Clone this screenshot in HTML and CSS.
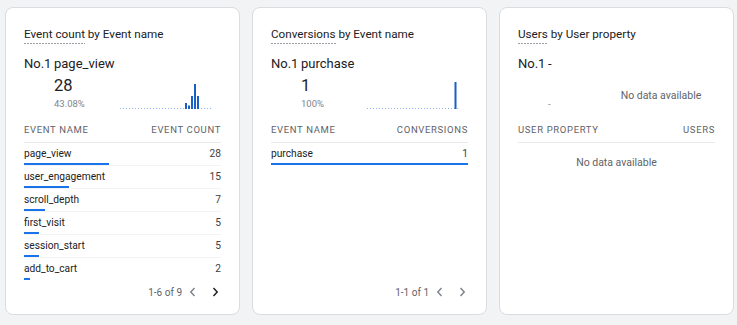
FILE: index.html
```html
<!DOCTYPE html>
<html lang="en">
<head>
    <meta charset="UTF-8">
    <meta name="viewport" content="width=device-width, initial-scale=1.0">
    <title>Events overview</title>
    <link rel="stylesheet" href="styles.css">
</head>
<body>
    <div class="dashboard">
        <section class="card">
            <h3 class="card-title"><span class="dim">Event count</span> by Event name</h3>
            <div class="top-item"><span class="rank">No.1</span><span>page_view</span></div>
            <div class="summary">
                <div class="summary-values">
                    <div class="value">28</div>
                    <div class="share">43.08%</div>
                </div>
                <svg class="spark" width="94" height="30" viewBox="0 0 94 30">
                    <line x1="0" y1="28.5" x2="92" y2="28.5" class="spark-base"/>
                    <rect x="65" y="23" width="2" height="6" class="spark-bar"/>
                    <rect x="68" y="25.5" width="2" height="3.5" class="spark-bar"/>
                    <rect x="71" y="16" width="2" height="13" class="spark-bar"/>
                    <rect x="74" y="4" width="2" height="25" class="spark-bar"/>
                    <rect x="77" y="16" width="2" height="13" class="spark-bar"/>
                </svg>
            </div>
            <div class="table">
                <div class="thead"><span>Event name</span><span>Event count</span></div>
                <div class="row">
                    <div class="row-line"><span>page_view</span><span class="num">28</span></div>
                    <div class="bar" style="width: 43.08%"></div>
                </div>
                <div class="row">
                    <div class="row-line"><span>user_engagement</span><span class="num">15</span></div>
                    <div class="bar" style="width: 23.08%"></div>
                </div>
                <div class="row">
                    <div class="row-line"><span>scroll_depth</span><span class="num">7</span></div>
                    <div class="bar" style="width: 10.77%"></div>
                </div>
                <div class="row">
                    <div class="row-line"><span>first_visit</span><span class="num">5</span></div>
                    <div class="bar" style="width: 7.69%"></div>
                </div>
                <div class="row">
                    <div class="row-line"><span>session_start</span><span class="num">5</span></div>
                    <div class="bar" style="width: 7.69%"></div>
                </div>
                <div class="row">
                    <div class="row-line"><span>add_to_cart</span><span class="num">2</span></div>
                    <div class="bar" style="width: 3.08%"></div>
                </div>
            </div>
            <div class="pager">
                <span class="page-info">1-6 of 9</span>
                <button type="button" class="page-btn disabled">
                    <svg width="8" height="10" viewBox="0 0 8 10"><path d="M5.5 1 1.8 5l3.7 4"/></svg>
                </button>
                <button type="button" class="page-btn">
                    <svg width="8" height="10" viewBox="0 0 8 10"><path d="M2.5 1 6.2 5 2.5 9"/></svg>
                </button>
            </div>
        </section>

        <section class="card">
            <h3 class="card-title"><span class="dim">Conversions</span> by Event name</h3>
            <div class="top-item"><span class="rank">No.1</span><span>purchase</span></div>
            <div class="summary">
                <div class="summary-values">
                    <div class="value">1</div>
                    <div class="share">100%</div>
                </div>
                <svg class="spark" width="94" height="30" viewBox="0 0 94 30">
                    <line x1="0" y1="28.5" x2="92" y2="28.5" class="spark-base"/>
                    <rect x="87.5" y="2" width="2" height="27" class="spark-bar"/>
                </svg>
            </div>
            <div class="table">
                <div class="thead"><span>Event name</span><span>Conversions</span></div>
                <div class="row">
                    <div class="row-line"><span>purchase</span><span class="num">1</span></div>
                    <div class="bar" style="width: 100%"></div>
                </div>
            </div>
            <div class="pager">
                <span class="page-info">1-1 of 1</span>
                <button type="button" class="page-btn disabled">
                    <svg width="8" height="10" viewBox="0 0 8 10"><path d="M5.5 1 1.8 5l3.7 4"/></svg>
                </button>
                <button type="button" class="page-btn disabled">
                    <svg width="8" height="10" viewBox="0 0 8 10"><path d="M2.5 1 6.2 5 2.5 9"/></svg>
                </button>
            </div>
        </section>

        <section class="card">
            <h3 class="card-title"><span class="dim">Users</span> by User property</h3>
            <div class="top-item"><span class="rank">No.1</span><span>-</span></div>
            <div class="summary">
                <div class="summary-values">
                    <div class="value"></div>
                    <div class="share">-</div>
                </div>
                <div class="spark empty">No data available</div>
            </div>
            <div class="table">
                <div class="thead"><span>User property</span><span>Users</span></div>
                <div class="no-data">No data available</div>
            </div>
        </section>
    </div>
</body>
</html>
```

FILE: styles.css
```css
body {
    margin: 0;
    background-color: #f1f3f4;
    font-family: Roboto, "Liberation Sans", Arial, sans-serif;
    color: #202124;
}
.dashboard {
    display: grid;
    grid-template-columns: repeat(3, 235px);
    gap: 12px;
    padding: 7px 3px 0 5px;
}
.card {
    height: 308px;
    box-sizing: border-box;
    background-color: #fff;
    border: 1px solid #dadce0;
    border-radius: 8px;
    padding: 16px 18px 11px 18px;
    display: flex;
    flex-direction: column;
}
.card > * {
    flex-shrink: 0;
}
.card-title {
    margin: 0;
    font-size: 11.7px;
    font-weight: 400;
    line-height: 20px;
    color: #202124;
}
.dim {
    padding-bottom: 3px;
    background-image: linear-gradient(to right, #9aa0a6 2px, transparent 2px);
    background-size: 3px 1px;
    background-repeat: repeat-x;
    background-position: left bottom;
}
.top-item {
    margin-top: 10px;
    font-size: 13px;
    line-height: 20px;
}
.rank {
    display: inline-block;
    width: 30px;
}
.summary {
    height: 43px;
    display: flex;
}
.summary-values {
    width: 96px;
    padding-left: 30px;
    box-sizing: border-box;
}
.value {
    margin-top: 1px;
    height: 22px;
    font-size: 16.5px;
    line-height: 22px;
}
.share {
    font-size: 9.5px;
    line-height: 14px;
    color: #80868b;
}
.spark {
    margin-top: 6px;
}
.spark-base {
    stroke: #8ab4f8;
    stroke-width: 1;
    stroke-dasharray: 1 2;
}
.spark-bar {
    fill: #1a5fc7;
}
.spark.empty {
    width: 94px;
    height: 30px;
    display: flex;
    align-items: center;
    justify-content: center;
    white-space: nowrap;
    font-size: 10.5px;
    color: #5f6368;
}
.thead {
    display: flex;
    justify-content: space-between;
    height: 25px;
    line-height: 25px;
    border-bottom: 1px solid #e8eaed;
    font-size: 9.5px;
    letter-spacing: 0.65px;
    text-transform: uppercase;
    color: #5f6368;
}
.row {
    padding-top: 2px;
    border-bottom: 1px solid #f1f3f4;
}
.row:last-child {
    border-bottom-color: transparent;
}
.row-line {
    display: flex;
    justify-content: space-between;
    font-size: 10.2px;
    line-height: 18px;
}
.num {
    color: #3c4043;
}
.bar {
    height: 2px;
    background-color: #1a73e8;
}
.no-data {
    margin-top: 10px;
    text-align: center;
    font-size: 10.5px;
    line-height: 20px;
    color: #5f6368;
}
.pager {
    margin-top: auto;
    height: 22px;
    display: flex;
    align-items: center;
    justify-content: flex-end;
    gap: 10px;
    font-size: 10px;
    color: #5f6368;
}
.page-info {
    margin-right: -5px;
}
.page-btn {
    width: 12px;
    height: 22px;
    padding: 0;
    border: none;
    background: none;
    display: flex;
    align-items: center;
    justify-content: center;
    cursor: pointer;
}
.page-btn path {
    fill: none;
    stroke: #202124;
    stroke-width: 1.5;
}
.page-btn.disabled path {
    stroke: #80868b;
}
```
